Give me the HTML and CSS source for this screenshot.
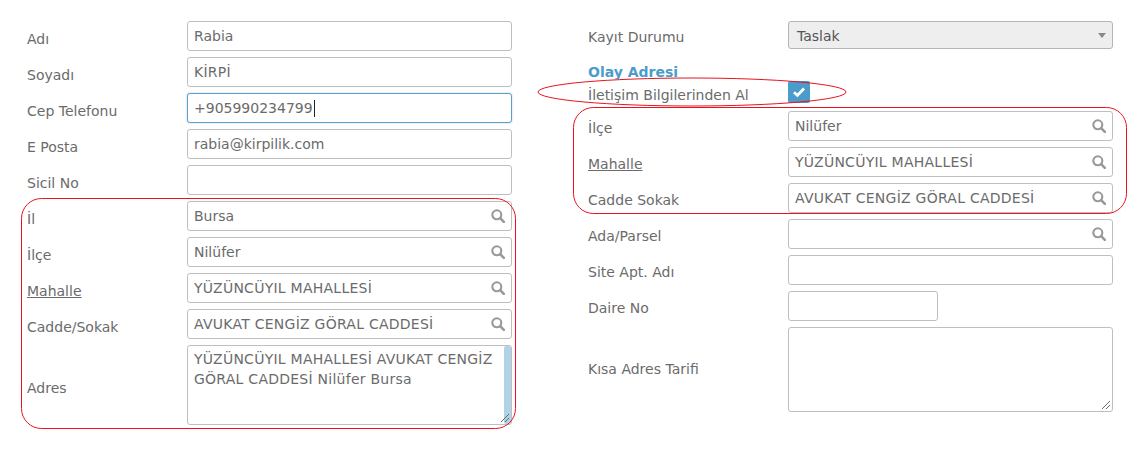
FILE: index.html
```html
<!DOCTYPE html>
<html lang="tr">
<head>
<meta charset="utf-8">
<title>Form</title>
<link rel="stylesheet" href="styles.css">
</head>
<body>
<svg width="0" height="0" class="defs"><defs>
<symbol id="search" viewBox="0 0 14 14"><circle cx="5.8" cy="5.8" r="4.5" fill="none" stroke="currentColor" stroke-width="2.1"/><path d="M9.2 9.2L12.8 12.8" stroke="currentColor" stroke-width="2.6" stroke-linecap="round"/></symbol>
<symbol id="grip" viewBox="0 0 10 10"><path d="M1 9L9 1M5 9L9 5" stroke="#666" stroke-width="1" fill="none"/></symbol>
</defs></svg>
<main class="page">
  <section class="col col-left">
    <div class="row"><label class="lbl">Adı</label><div class="field">Rabia</div></div>
    <div class="row"><label class="lbl">Soyadı</label><div class="field caps">KİRPİ</div></div>
    <div class="row"><label class="lbl">Cep Telefonu</label><div class="field focus">+905990234799<span class="caret"></span></div></div>
    <div class="row"><label class="lbl">E Posta</label><div class="field">rabia@kirpilik.com</div></div>
    <div class="row"><label class="lbl">Sicil No</label><div class="field"></div></div>
    <div class="row"><label class="lbl">İl</label><div class="field">Bursa<svg class="ico"><use href="#search"/></svg></div></div>
    <div class="row"><label class="lbl">İlçe</label><div class="field">Nilüfer<svg class="ico"><use href="#search"/></svg></div></div>
    <div class="row"><label class="lbl link">Mahalle</label><div class="field caps">YÜZÜNCÜYIL MAHALLESİ<svg class="ico"><use href="#search"/></svg></div></div>
    <div class="row"><label class="lbl">Cadde/Sokak</label><div class="field caps">AVUKAT CENGİZ GÖRAL CADDESİ<svg class="ico"><use href="#search"/></svg></div></div>
    <div class="row row-area"><label class="lbl">Adres</label><div class="field area area-adres caps">YÜZÜNCÜYIL MAHALLESİ AVUKAT CENGİZ GÖRAL CADDESİ Nilüfer Bursa<span class="thumb"></span><svg class="grip"><use href="#grip"/></svg></div></div>
  </section>
  <section class="col col-right">
    <div class="row row-select"><label class="lbl">Kayıt Durumu</label><div class="field select">Taslak<span class="arrow"></span></div></div>
    <h2 class="heading">Olay Adresi</h2>
    <div class="row row-check"><label class="lbl">İletişim Bilgilerinden Al</label><span class="check"><svg width="14" height="12" viewBox="0 0 14 12"><path d="M2 6.2L5.4 9.4L12 2.6" fill="none" stroke="#fff" stroke-width="2.8"/></svg></span></div>
    <div class="row"><label class="lbl">İlçe</label><div class="field">Nilüfer<svg class="ico"><use href="#search"/></svg></div></div>
    <div class="row"><label class="lbl link">Mahalle</label><div class="field caps">YÜZÜNCÜYIL MAHALLESİ<svg class="ico"><use href="#search"/></svg></div></div>
    <div class="row"><label class="lbl">Cadde Sokak</label><div class="field caps">AVUKAT CENGİZ GÖRAL CADDESİ<svg class="ico"><use href="#search"/></svg></div></div>
    <div class="row"><label class="lbl">Ada/Parsel</label><div class="field"><svg class="ico"><use href="#search"/></svg></div></div>
    <div class="row"><label class="lbl">Site Apt. Adı</label><div class="field"></div></div>
    <div class="row"><label class="lbl">Daire No</label><div class="field short"></div></div>
    <div class="row row-area2"><label class="lbl">Kısa Adres Tarifi</label><div class="field area"><svg class="grip"><use href="#grip"/></svg></div></div>
  </section>
  <svg class="marks" width="1146" height="452" viewBox="0 0 1146 452" aria-hidden="true">
    <rect x="21.5" y="198.5" width="494" height="230" rx="20" ry="20"/>
    <rect x="573.5" y="107.5" width="553" height="106" rx="20" ry="20"/>
    <ellipse cx="692" cy="92" rx="154" ry="14"/>
  </svg>
</main>
</body>
</html>
```
FILE: styles.css
```css
* { box-sizing: border-box; }
html, body { margin: 0; padding: 0; background: #fff; }
body { font-family: "DejaVu Sans", sans-serif; font-size: 14px; color: #6b6b6b; }
.defs { position: absolute; }
.page { position: relative; display: flex; width: 1146px; height: 452px; padding: 21px 0 0 27px; overflow: hidden; }
.col { display: flex; flex-direction: column; gap: 6px; width: 485px; }
.col-right { margin-left: 76px; width: 525px; }
.row { display: grid; grid-template-columns: 160px 325px; align-items: center; min-height: 30px; }
.col-right .row { grid-template-columns: 200px 325px; }
.lbl { color: #6b6b6b; padding-top: 5px; white-space: nowrap; }
.col-right .lbl { padding-top: 3px; }
.link { text-decoration: underline; }
.field { position: relative; height: 30px; line-height: 29px; padding: 0 6px; background: #fff; border: 1px solid #bfbfbf; border-radius: 3px; color: #6b6b6b; white-space: nowrap; }
.caps { letter-spacing: .25px; }
.focus { border-color: #5b9fcb; box-shadow: 0 0 2px rgba(91,159,203,.5); }
.caret { display: inline-block; width: 1px; height: 17px; margin-left: 1px; background: #222; vertical-align: -4px; }
.ico { position: absolute; right: 6px; top: 7px; width: 14px; height: 14px; color: #999; }
.area { height: 80px; white-space: normal; line-height: 20px; padding: 3px 16px 0 6px; }
.row-area { min-height: 80px; }
.row-area2 { min-height: 85px; }
.row-area2 .area { height: 85px; }
.col-right .row-area2 .lbl { padding-top: 0; padding-bottom: 2px; }
.thumb { position: absolute; right: 0; top: 0; bottom: 0; width: 7px; background: #b0d3e8; border-radius: 2px; }
.grip { position: absolute; right: 1px; bottom: 1px; width: 10px; height: 10px; }
.select { height: 28px; line-height: 28px; background: #eee; border-color: #b5b5b5; padding-left: 8px; color: #555; }
.arrow { position: absolute; right: 6px; top: 11px; width: 0; height: 0; border: 4px solid transparent; border-top: 5px solid #888; border-bottom: 0; }
.row-select { min-height: 28px; }
.heading { margin: 9px 0 -7px; font-size: 14px; line-height: 16px; font-weight: 700; color: #4b9cc9; height: 16px; }
.row-check { position: relative; height: 24px; min-height: 24px; padding-top: 2px; margin-bottom: 2px; background: #fff; }
.col-right .row-check .lbl { padding-top: 6px; }
.check { display: flex; align-items: center; justify-content: center; width: 22px; height: 22px; background: #4b9bcb; border-radius: 2px; }
.short { width: 150px; }
.marks { position: absolute; left: 0; top: 0; pointer-events: none; }
.marks rect, .marks ellipse { fill: none; stroke: #e8131f; stroke-width: 1; }
```
